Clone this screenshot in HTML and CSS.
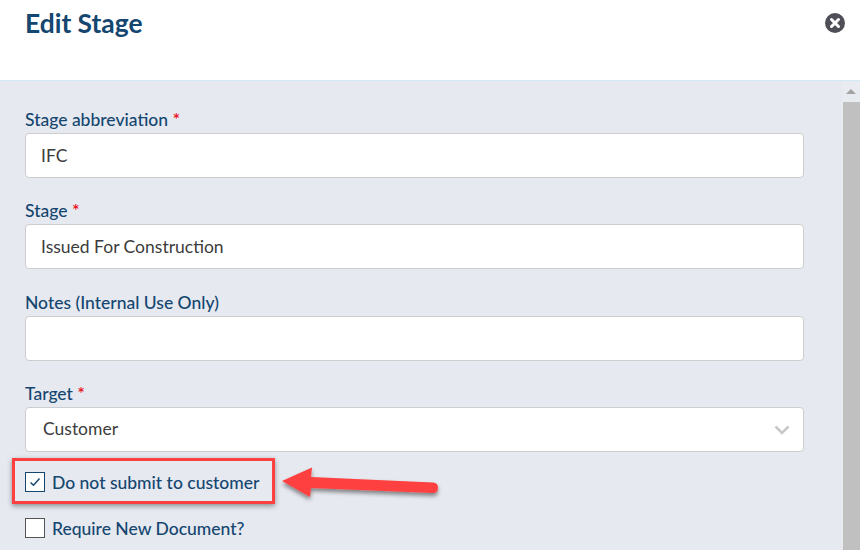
FILE: index.html
```html
<!DOCTYPE html>
<html lang="en">
<head>
<meta charset="utf-8">
<title>Edit Stage</title>
<link rel="stylesheet" href="styles.css">
</head>
<body>
<div class="modal">
  <header class="modal-header">
    <h1 class="modal-title">Edit Stage</h1>
    <svg class="close-icon" width="20" height="20" viewBox="0 0 20 20" aria-hidden="true">
      <circle cx="10" cy="10" r="10" fill="#4f4f57"/>
      <path d="M6.500 6.500l7 7M13.500 6.500l-7 7" stroke="#fff" stroke-width="3" stroke-linecap="round"/>
    </svg>
  </header>
  <div class="modal-body">
    <form class="form">
      <div class="field">
        <label class="field-label">Stage abbreviation <span class="req">*</span></label>
        <div class="input">IFC</div>
      </div>
      <div class="field">
        <label class="field-label">Stage <span class="req">*</span></label>
        <div class="input">Issued For Construction</div>
      </div>
      <div class="field">
        <label class="field-label">Notes (Internal Use Only)</label>
        <div class="input"></div>
      </div>
      <div class="field">
        <label class="field-label">Target <span class="req">*</span></label>
        <div class="input select">
          <span class="select-value">Customer</span>
          <svg class="chevron" width="16" height="10" viewBox="0 0 16 10" aria-hidden="true">
            <path d="M1.500 1.500L8 8l6.500-6.500" fill="none" stroke="#c8c8c8" stroke-width="2.500"/>
          </svg>
        </div>
      </div>
      <div class="check-row first">
        <span class="checkbox checked">
          <svg width="12" height="10" viewBox="0 0 12 10" aria-hidden="true">
            <path d="M1.500 5.500L4.500 8.300L10.500 1.500" fill="none" stroke="#14466f" stroke-width="1.500"/>
          </svg>
        </span>
        <span class="check-label">Do not submit to customer</span>
      </div>
      <div class="check-row">
        <span class="checkbox"></span>
        <span class="check-label">Require New Document?</span>
      </div>
    </form>
    <div class="scrollbar">
      <div class="scroll-btn"><span class="scroll-arrow"></span></div>
      <div class="scroll-thumb"></div>
    </div>
  </div>
  <div class="callout-box"></div>
  <svg class="callout-arrow" width="170" height="60" viewBox="0 0 170 60" aria-hidden="true">
    <defs>
      <filter id="shadow" x="-10%" y="-30%" width="120%" height="170%">
        <feDropShadow dx="0" dy="3" stdDeviation="2" flood-color="#000" flood-opacity="0.45"/>
      </filter>
    </defs>
    <g filter="url(#shadow)">
      <path d="M12 21L42 7.500L41 17L163 22.500Q168 23 168 27.500Q168 33 163 33L41 28L40 37Z" fill="#ff4040"/>
    </g>
  </svg>
</div>
</body>
</html>
```
FILE: styles.css
```css
* { box-sizing: border-box; }
html, body { margin: 0; padding: 0; height: 100%; overflow: hidden; }
body { font-family: Lato, "Open Sans", sans-serif; background: #fff; }
.modal { position: relative; width: 860px; height: 550px; display: flex; flex-direction: column; overflow: hidden; }
.modal-header {
  height: 81px; flex: none; display: flex; justify-content: space-between; align-items: flex-start;
  padding: 13px 15px 0 25px; background: #fff; border-bottom: 1px solid #d3e9f5;
}
.modal-title { margin: -1px 0 0; font-size: 26.400px; line-height: 22px; font-weight: 700; color: #14466f; }
.close-icon { display: block; }
.modal-body { flex: 1; display: flex; background: #e6e9ef; min-height: 0; }
.form { width: 842px; flex: none; padding: 28px 38px 0 25px; }
.field { margin-bottom: 22.400px; }
.field-label { display: block; font-size: 17.500px; line-height: 22px; margin-bottom: 2px; color: #14466f; font-weight: 500; }
.req { color: #e8000d; font-size: 18px; line-height: 0; }
.input {
  height: 45px; background: #fff; border: 1px solid #cdcdcd; border-radius: 4px;
  padding: 0 15px; display: flex; align-items: center; font-size: 17.500px; color: #3c3c3c;
}
.select { justify-content: space-between; padding: 0 13px 0 17px; }
.select-value { margin-top: -2px; }
.chevron { display: block; }
.check-row { display: flex; align-items: center; gap: 7px; height: 22px; margin-bottom: 24px; }
.check-row.first { margin-top: -3.600px; }
.checkbox {
  width: 20px; height: 20px; flex: none; background: #fff; border: 1px solid #555;
  display: flex; align-items: center; justify-content: center;
}
.checkbox.checked { border-color: #14466f; }
.check-label { font-size: 17.500px; line-height: 22px; margin-top: 2px; color: #14466f; font-weight: 500; }
.scrollbar { width: 18px; flex: none; background: #ebebeb; display: flex; flex-direction: column; }
.scroll-btn { height: 21px; display: flex; align-items: center; justify-content: center; background: #e8ebf0; }
.scroll-arrow { width: 0; height: 0; border-left: 5px solid transparent; border-right: 5px solid transparent; border-bottom: 5px solid #a3a3a3; }
.scroll-thumb { flex: 1; background: #c0c0c0; margin-left: 1px; }
.callout-box {
  position: absolute; left: 12px; top: 458px; width: 263px; height: 46px;
  border: 3px solid #ff4040; box-shadow: 0 2px 5px rgba(0,0,0,.4);
}
.callout-arrow { position: absolute; left: 270px; top: 460px; overflow: visible; }
```
